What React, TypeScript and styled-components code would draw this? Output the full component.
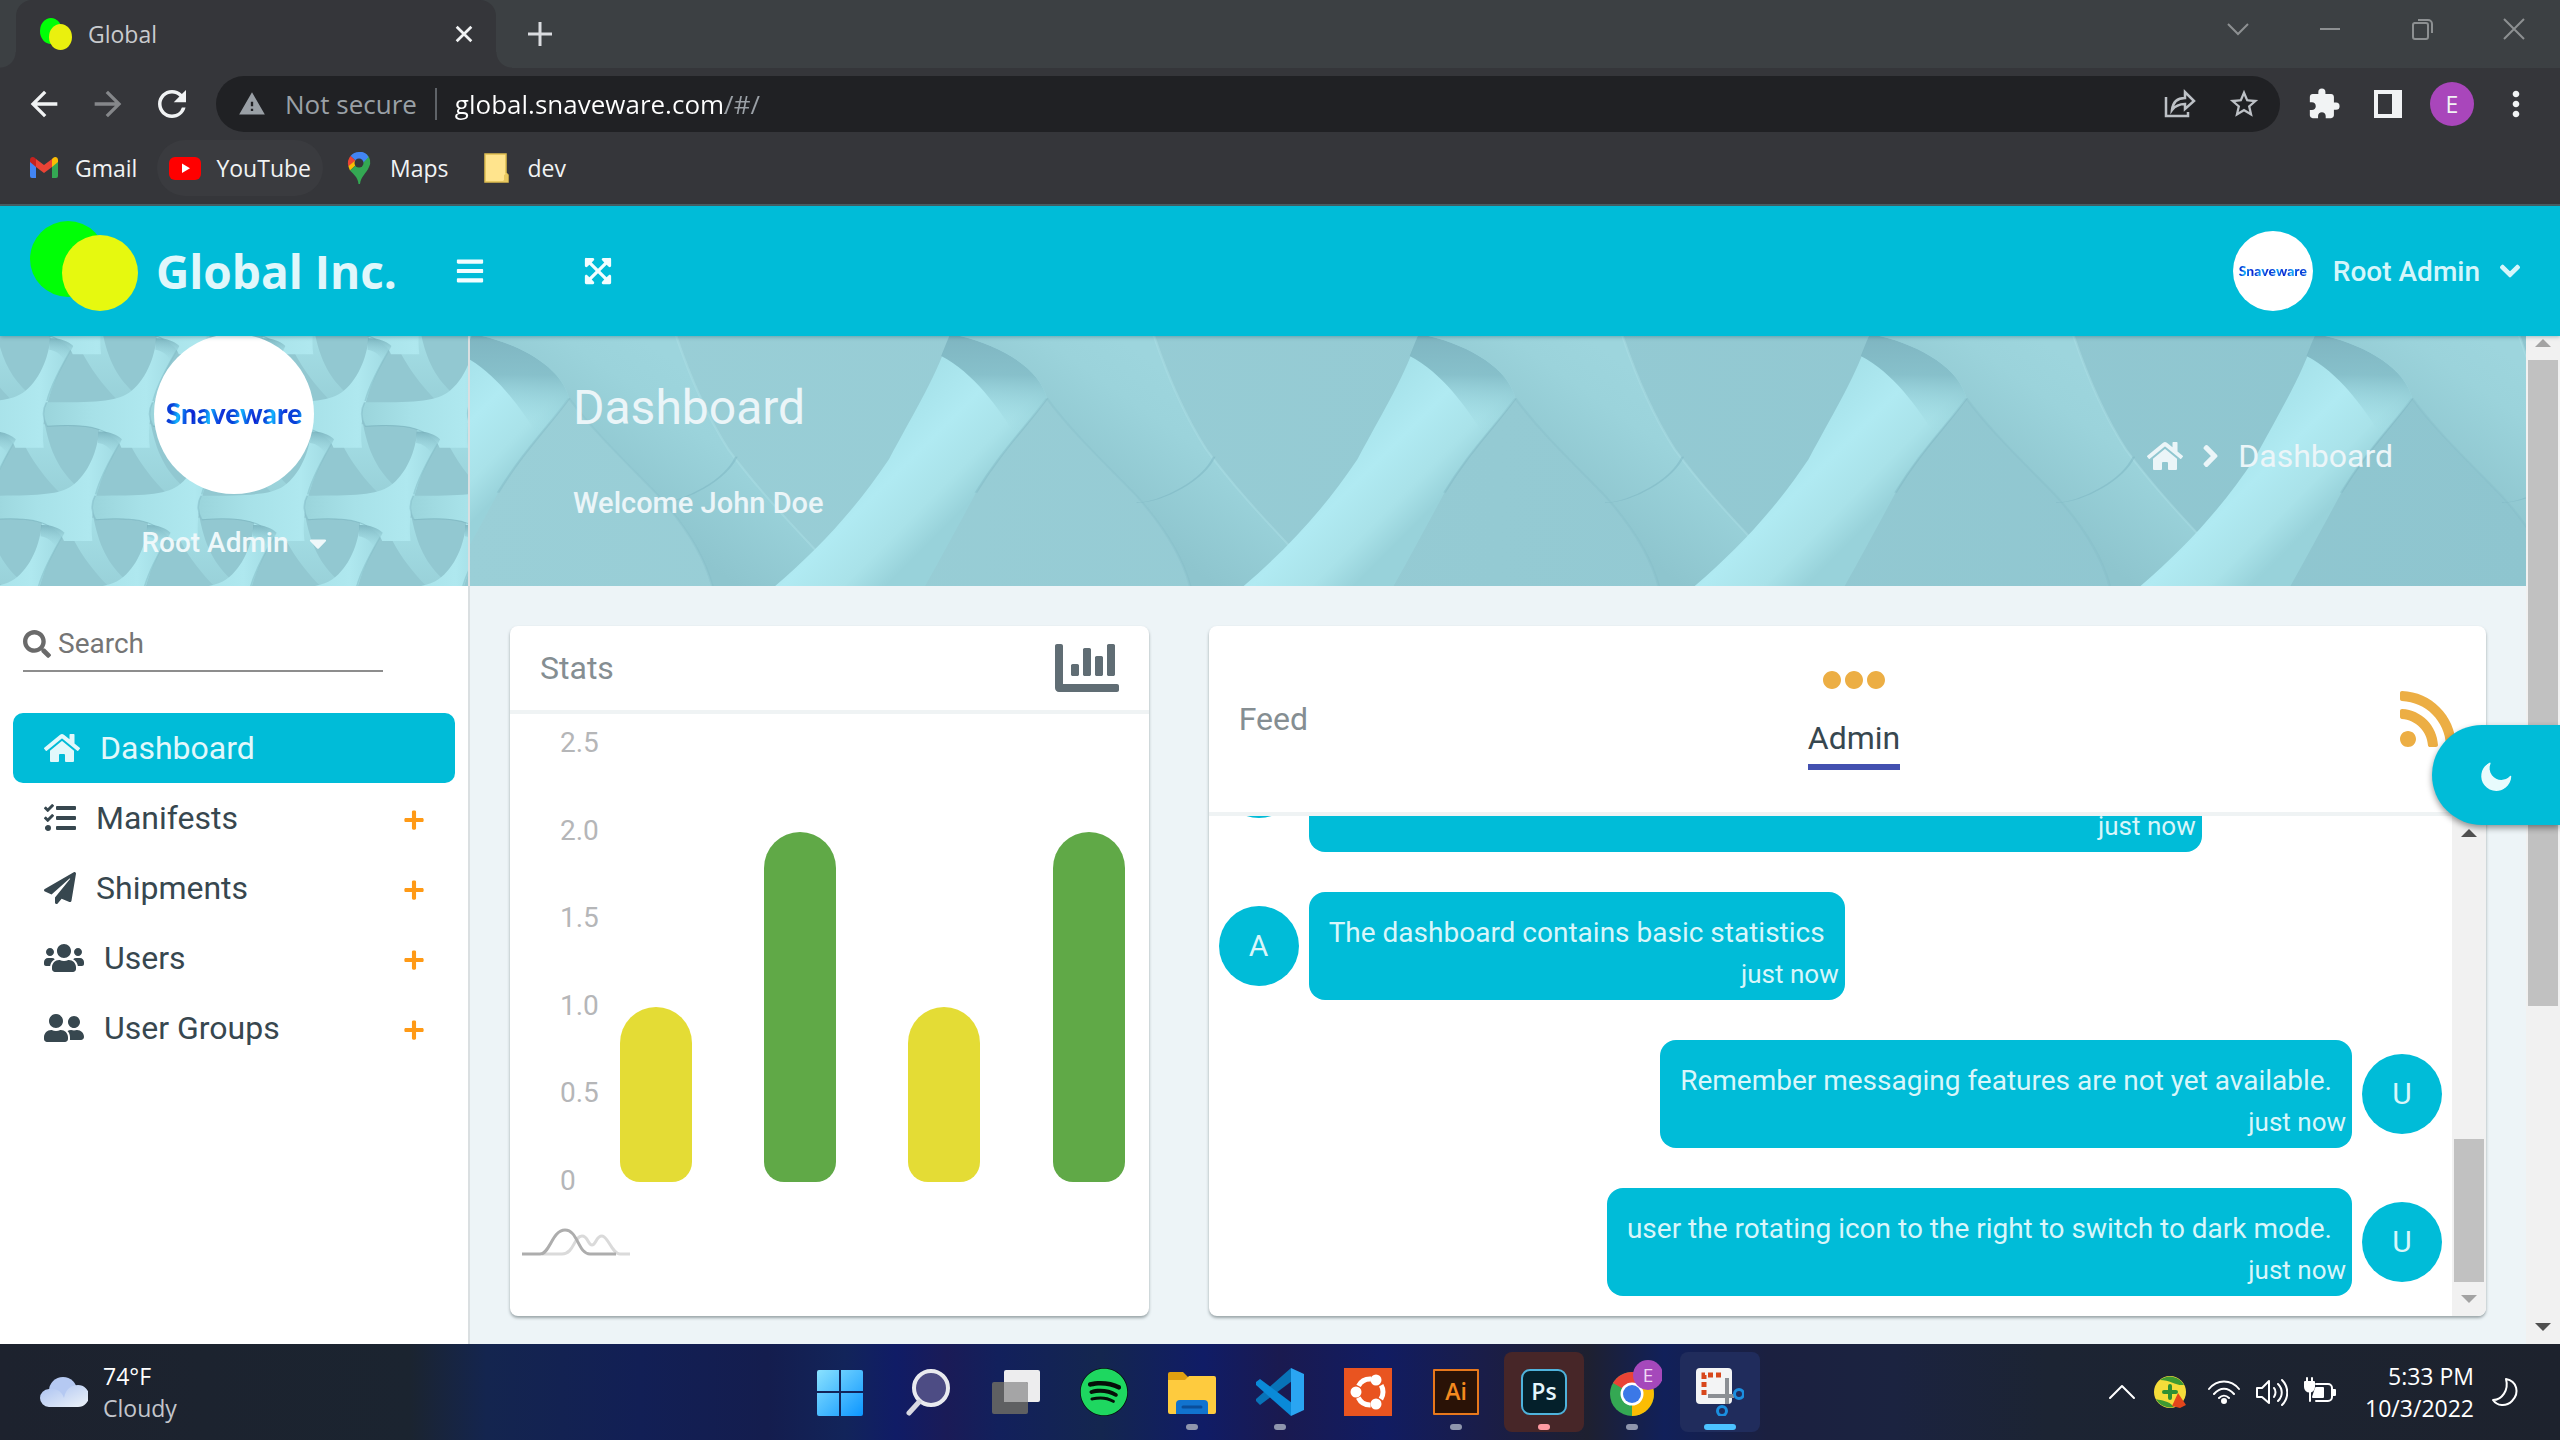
import React from 'react';
import styled, { createGlobalStyle } from 'styled-components';
import {
  FaHome, FaTasks, FaPaperPlane, FaUsers, FaUserFriends, FaPlus, FaSearch, FaBars,
  FaExpandArrowsAlt, FaChevronDown, FaChevronRight, FaCaretDown, FaChartBar, FaEllipsisH,
  FaRss, FaMoon, FaSpotify,
} from 'react-icons/fa';
import {
  MdArrowBack, MdArrowForward, MdRefresh, MdWarning, MdStarBorder, MdExtension, MdMoreVert,
} from 'react-icons/md';

const cyan = '#00bcd8';
const uiFont = `"Open Sans", "Noto Sans", sans-serif`;
const appFont = `Roboto, "Liberation Sans", sans-serif`;

const GlobalStyle = createGlobalStyle`
  *, *::before, *::after { box-sizing: border-box; }
  body { margin: 0; background: #edf4f7; }
  button, input { font: inherit; color: inherit; background: none; border: 0; padding: 0; margin: 0; outline: 0; }
  a { color: inherit; text-decoration: none; }
  h1, h2, p, ul { margin: 0; padding: 0; font-weight: inherit; font-size: inherit; list-style: none; }
  svg { display: block; flex: none; }
`;

const Screen = styled.div`
  display: flex;
  flex-direction: column;
  height: 100vh;
  overflow: hidden;
  font-family: ${appFont};
`;

/* Font Awesome glyphs are not square: the box takes the glyph's own width. */
const Glyph = styled.span<{ $w: number; $h: number }>`
  display: block;
  flex: none;
  svg { width: ${p => p.$w}px; height: ${p => p.$h}px; }
`;

/* ---------- browser ---------- */

const Browser = styled.div`
  flex: none;
  background: #35363a;
  border-bottom: 2px solid #4a5f64;
  font-family: ${uiFont};
  color: #f1f3f4;
`;

const TabStrip = styled.div`
  display: flex;
  height: 68px;
  padding-left: 16px;
  background: #3c4043;
`;

const Tab = styled.div`
  position: relative;
  display: flex;
  align-items: center;
  gap: 16px;
  width: 480px;
  padding: 0 16px 0 24px;
  border-radius: 16px 16px 0 0;
  background: #35363a;
  font-size: 23px;
  color: #c9cbce;
  &::before, &::after {
    content: '';
    position: absolute;
    bottom: 0;
    width: 16px;
    height: 16px;
  }
  &::before { left: -16px; background: radial-gradient(circle at 0 0, #3c4043 15px, #35363a 16px); }
  &::after { right: -16px; background: radial-gradient(circle at 100% 0, #3c4043 15px, #35363a 16px); }
`;

const TabTitle = styled.span`
  flex: 1;
`;

const PlainButton = styled.button<{ $w: number; $color?: string }>`
  display: flex;
  flex: none;
  align-items: center;
  justify-content: center;
  width: ${p => p.$w}px;
  color: ${p => p.$color ?? '#f1f3f4'};
`;

const WindowControls = styled.div`
  display: flex;
  height: 58px;
  margin-left: auto;
`;

const Toolbar = styled.div`
  display: flex;
  align-items: center;
  height: 72px;
  padding: 0 12px;
`;

const Omnibox = styled.div`
  display: flex;
  flex: 1;
  align-items: center;
  height: 56px;
  margin: 0 12px;
  padding: 0 4px 0 22px;
  border-radius: 28px;
  background: #202124;
  font-size: 26px;
  color: #9aa0a6;
`;

const Security = styled.span`
  margin-left: 19px;
  padding-right: 18px;
  border-right: 2px solid #5f6368;
  line-height: 32px;
`;

const Address = styled.input`
  flex: 1;
  min-width: 0;
  padding-left: 18px;
  color: transparent;
  background: linear-gradient(90deg, #fff 288px, #9aa0a6 288px);
  -webkit-background-clip: text;
  background-clip: text;
`;

const Profile = styled.span`
  width: 44px;
  border-radius: 50%;
  background: #a946bb;
  line-height: 44px;
  text-align: center;
  font-size: 23px;
`;

const Bookmarks = styled.nav`
  display: flex;
  gap: 8px;
  height: 64px;
  padding: 0 16px 8px;
  font-size: 23px;
`;

const Bookmark = styled.a<{ $hover?: boolean }>`
  display: flex;
  align-items: center;
  gap: 15px;
  padding: 0 12px;
  border-radius: 28px;
  background: ${p => (p.$hover ? '#3a3b3f' : 'transparent')};
`;

/* ---------- application header ---------- */

const AppHeader = styled.header`
  position: relative;
  z-index: 2;
  display: flex;
  flex: none;
  align-items: center;
  height: 130px;
  padding: 0 40px 0 28px;
  background: ${cyan};
  color: #fff;
  box-shadow: 0 1px 4px rgba(0, 80, 95, 0.35);
`;

const Brand = styled.a`
  display: flex;
  align-items: center;
  gap: 16px;
  width: 427px;
  font: 700 46px/60px "Open Sans", sans-serif;
  color: #e0f7fb;
`;

const HeaderButton = styled.button`
  display: flex;
  width: 128px;
  color: #f3fdff;
`;

const AccountMenu = styled.button`
  display: flex;
  align-items: center;
  gap: 20px;
  margin-left: auto;
  font-size: 28px;
  font-weight: 500;
  color: #d5f6fb;
`;

const Avatar = styled.span<{ $size: number }>`
  display: flex;
  align-items: center;
  justify-content: center;
  width: ${p => p.$size}px;
  height: ${p => p.$size}px;
  border-radius: 50%;
  background: #fff;
`;

const Wordmark = styled.span<{ $size: number }>`
  font: 900 ${p => p.$size}px/1.4 Lato, sans-serif;
  color: transparent;
  background: repeating-linear-gradient(100deg, #0a3fd8 0 6%, #12b6fe 11%, #0b5be6 16%, #1218d0 22%);
  -webkit-background-clip: text;
  background-clip: text;
`;

/* ---------- body ---------- */

const Body = styled.div`
  display: flex;
  flex: 1;
  min-height: 0;
`;

const Sidebar = styled.aside`
  flex: none;
  width: 470px;
  border-right: 2px solid #dadfe1;
  background: #fff;
`;

const Art = styled.svg`
  position: absolute;
  inset: 0;
  width: 100%;
  height: 100%;
`;

const ProfilePanel = styled.div`
  position: relative;
  display: flex;
  flex-direction: column;
  align-items: center;
  height: 250px;
  overflow: hidden;
  background: #97ccd5;
  ${Avatar} { position: relative; margin-top: -2px; }
`;

const ProfileButton = styled.button`
  position: relative;
  display: flex;
  align-items: center;
  gap: 20px;
  margin-top: 31px;
  font-size: 28px;
  font-weight: 500;
  line-height: 36px;
  color: #eef8fa;
`;

const SearchLabel = styled.label`
  display: flex;
  align-items: center;
  gap: 7px;
  width: 360px;
  margin: 38px 0 41px 23px;
  padding-bottom: 6px;
  border-bottom: 2px solid #8d8d8d;
  color: #6a6a6a;
`;

const SearchInput = styled.input`
  flex: 1;
  min-width: 0;
  font-size: 28px;
  line-height: 40px;
  &::placeholder { color: #757575; opacity: 1; }
`;

const NavList = styled.ul`
  padding: 0 13px;
`;

const NavLink = styled.a<{ $active?: boolean }>`
  display: flex;
  align-items: center;
  gap: 20px;
  height: 70px;
  padding: 0 30px 0 31px;
  border-radius: 10px;
  font-size: 32px;
  background: ${p => (p.$active ? cyan : 'transparent')};
  color: ${p => (p.$active ? '#e2f8fb' : '#37474f')};
`;

const Expand = styled.span`
  margin: 4px 0 0 auto;
  color: #ff9a16;
`;

const Main = styled.main`
  display: flex;
  flex: 1;
  flex-direction: column;
  min-width: 0;
`;

const Banner = styled.section`
  position: relative;
  display: flex;
  flex: none;
  align-items: flex-start;
  justify-content: space-between;
  height: 250px;
  padding: 44px 133px 0 103px;
  overflow: hidden;
  background: #97ccd5;
  color: #ebf5f8;
`;

const BannerText = styled.div`
  position: relative;
  h1 { font-size: 48px; line-height: 56px; }
  p { margin-top: 49px; font-size: 29px; font-weight: 500; line-height: 36px; }
`;

const Crumbs = styled.nav`
  position: relative;
  display: flex;
  align-items: center;
  gap: 20px;
  height: 152px;
  font-size: 32px;
`;

const Cards = styled.div`
  display: grid;
  grid-template-columns: 1fr 2fr;
  flex: 1;
  gap: 60px;
  min-height: 0;
  padding: 40px 40px 28px;
`;

const Card = styled.section`
  display: flex;
  flex-direction: column;
  min-width: 0;
  min-height: 0;
  overflow: hidden;
  border-radius: 8px;
  background: #fff;
  box-shadow: 0 2px 3px rgba(70, 85, 90, 0.5);
`;

const CardHeader = styled.header<{ $h: number }>`
  display: flex;
  flex: none;
  align-items: center;
  justify-content: space-between;
  height: ${p => p.$h}px;
  padding: 0 30px;
  border-bottom: 4px solid #eff3f4;
  font-size: 32px;
  h2 { color: #858e92; }
`;

const FeedTab = styled.button`
  display: flex;
  flex-direction: column;
  align-items: center;
  padding-bottom: 20px;
  color: #37474f;
  svg { color: #ecae44; }
`;

const TabLabel = styled.span`
  border-bottom: 6px solid #4350b0;
  line-height: 52px;
`;

/* ---------- chart ---------- */

const Chart = styled.div`
  display: flex;
  gap: 22px;
  height: 470px;
  margin-top: 13px;
  padding: 0 24px 0 50px;
`;

const Axis = styled.ul`
  display: flex;
  flex-direction: column;
  justify-content: space-between;
  width: 38px;
  font-size: 28px;
  line-height: 32px;
  color: #b5b6b8;
`;

const Plot = styled.div`
  display: flex;
  flex: 1;
  align-items: flex-end;
  justify-content: space-between;
  margin: 17px 0 15px;
`;

const Bar = styled.div<{ $color: string }>`
  width: 72px;
  border-radius: 36px 36px 20px 20px;
  background: ${p => p.$color};
`;

const ChartMark = styled.svg`
  margin: 30px 0 0 12px;
`;

/* ---------- feed ---------- */

const FeedBody = styled.div`
  display: flex;
  flex: 1;
  min-height: 0;
`;

const Messages = styled.ul`
  display: flex;
  flex: 1;
  flex-direction: column;
  justify-content: flex-end;
  gap: 40px;
  padding: 0 10px 20px;
  overflow: hidden;
`;

const Message = styled.li<{ $own?: boolean }>`
  display: flex;
  flex: none;
  flex-direction: ${p => (p.$own ? 'row-reverse' : 'row')};
  align-items: center;
  gap: 10px;
`;

const Initial = styled.span`
  width: 80px;
  height: 80px;
  border-radius: 50%;
  background: ${cyan};
  color: #d9f6fa;
  font-size: 30px;
  line-height: 80px;
  text-align: center;
`;

const Bubble = styled.div<{ $tall?: boolean }>`
  display: flex;
  flex-direction: column;
  justify-content: flex-end;
  width: ${p => (p.$tall ? '73%' : 'auto')};
  min-height: ${p => (p.$tall ? 148 : 108)}px;
  padding-bottom: 5px;
  border-radius: 16px;
  background: ${cyan};
  color: #d9f6fa;
  p { padding: 0 20px; font-size: 28px; line-height: 40px; }
  time { padding-right: 6px; font-size: 26px; line-height: 42px; text-align: right; }
`;

/* ---------- scroll bars ---------- */

const Track = styled.div<{ $tucked?: boolean }>`
  display: flex;
  flex: none;
  flex-direction: column;
  align-items: center;
  width: 34px;
  margin-top: ${p => (p.$tucked ? '-10px' : '0')};
  background: #f1f1f1;
`;

const Arrow = styled.span<{ $down?: boolean; $dim?: boolean }>`
  display: flex;
  flex: none;
  align-items: center;
  justify-content: center;
  height: 34px;
  &::before {
    content: '';
    border: 8px solid transparent;
    border-width: ${p => (p.$down ? '8px 8px 0' : '0 8px 8px')};
    border-${p => (p.$down ? 'top' : 'bottom')}-color: ${p => (p.$dim ? '#a3a3a3' : '#505050')};
  }
`;

const Rail = styled.div<{ $end?: boolean }>`
  display: flex;
  flex: 1;
  align-items: ${p => (p.$end ? 'flex-end' : 'flex-start')};
  width: 30px;
  min-height: 0;
`;

const Thumb = styled.div`
  width: 100%;
  background: #c1c1c1;
`;

const ThemeButton = styled.button`
  position: absolute;
  z-index: 3;
  top: 725px;
  right: 0;
  display: flex;
  align-items: center;
  width: 128px;
  height: 100px;
  padding: 4px 0 0 48px;
  border-radius: 50px 0 0 50px;
  background: ${cyan};
  color: #e8fbfd;
  box-shadow: 0 3px 6px rgba(0, 0, 0, 0.4);
  svg { transform: rotate(-37deg); }
`;

/* ---------- task bar ---------- */

const TaskBar = styled.footer`
  position: relative;
  display: grid;
  grid-template-columns: 1fr auto 1fr;
  flex: none;
  align-items: center;
  height: 96px;
  font-family: ${uiFont};
  color: #fff;
  background: linear-gradient(90deg, #1d222e 0, #1b2430 16%, #14254f 19%, #121f55 25%, #141d4e 30%,
    #12245a 33%, #101c66 35%, #1a1b57 37%, #12205c 39%, #14264f 43%, #101c66 47%, #1a1a50 50%,
    #111c62 54%, #1a1d48 58%, #1e2030 62%, #11205a 65%, #1b2040 69%, #1b2340 74%, #1c2433 80%, #1d222d 100%);
`;

const Weather = styled.button`
  display: flex;
  align-items: center;
  gap: 15px;
  margin-left: 40px;
  font-size: 23px;
  line-height: 32px;
  text-align: left;
  span { display: block; }
  span + span { color: #c3c6cc; }
`;

const Apps = styled.div`
  display: flex;
  gap: 8px;
`;

const AppButton = styled.button<{ $bg?: string }>`
  position: relative;
  display: flex;
  align-items: center;
  justify-content: center;
  width: 80px;
  height: 80px;
  border-radius: 8px;
  background: ${p => p.$bg ?? 'transparent'};
`;

const Running = styled.span<{ $color: string; $w: number }>`
  position: absolute;
  bottom: 2px;
  left: calc(50% - ${p => p.$w / 2}px);
  width: ${p => p.$w}px;
  height: 6px;
  border-radius: 3px;
  background: ${p => p.$color};
`;

const Tray = styled.div`
  display: flex;
  align-items: center;
  justify-content: flex-end;
  gap: 16px;
  padding-right: 38px;
`;

const SystemIcons = styled.button`
  display: flex;
  gap: 16px;
  margin-left: 6px;
`;

const Clock = styled.time`
  width: 122px;
  font-size: 23px;
  line-height: 32px;
  text-align: right;
  span { display: block; }
`;

/* ---------- drawings ---------- */

const DiscLogo = () => (
  <svg width="112" height="100" viewBox="0 0 112 100">
    <circle cx="40" cy="38" r="38" fill="#00ff06" />
    <circle cx="72" cy="52" r="38" fill="#e6f90f" />
  </svg>
);

const Favicon = () => (
  <svg width="32" height="32" viewBox="0 0 32 32">
    <ellipse cx="11" cy="13" rx="11" ry="13" fill="#00ff06" />
    <ellipse cx="20.500" cy="19" rx="11.500" ry="13" fill="#eaf00e" />
  </svg>
);

const Line = ({ d, size = 24, w = 2 }: { d: string; size?: number; w?: number }) => (
  <svg width={size} height={size} viewBox="0 0 24 24" fill="none" stroke="currentColor" strokeWidth={w}>
    <path d={d} />
  </svg>
);

const GmailIcon = () => (
  <svg width="32" height="32" viewBox="0 0 32 32">
    <path d="M2 8v16a2 2 0 0 0 2 2h4V13z" fill="#4285f4" />
    <path d="M30 8v16a2 2 0 0 1-2 2h-4V13z" fill="#34a853" />
    <path d="M24 7v8l6-5V8c0-3-3-4-5-2z" fill="#fbbc04" />
    <path d="M8 7v8l-6-5V8c0-3 3-4 5-2z" fill="#c5221f" />
    <path d="M8 7l8 6 8-6v8l-8 6-8-6z" fill="#ea4335" />
  </svg>
);

const YouTubeIcon = () => (
  <svg width="32" height="32" viewBox="0 0 32 32">
    <rect y="5" width="32" height="23" rx="6" fill="#f00" />
    <path d="M13 11.500v9.500l8-4.700z" fill="#fff" />
  </svg>
);

const MapsIcon = () => (
  <svg width="32" height="32" viewBox="0 0 32 32">
    <path d="M16 0A11 11 0 0 0 7.500 4L13 9 24 2.500A11 11 0 0 0 16 0z" fill="#4285f4" />
    <path d="M7.500 4A11 11 0 0 0 5.500 14.500L13 9z" fill="#ea4335" />
    <path d="M24 2.500L7 18.500A11 11 0 0 1 5.500 14L13 8z" fill="#fbbc04" />
    <path d="M24 2.500A11 11 0 0 1 26 15C23 22 18 24 17 32H15.500C15 25 10 22 7 18.500z" fill="#34a853" />
    <path d="M16 0A11 11 0 0 1 25.500 5L17 14 12 9z" fill="#4285f4" />
    <circle cx="16" cy="11" r="4.500" fill="#35363a" />
  </svg>
);

const FolderMark = () => (
  <svg width="32" height="32" viewBox="0 0 32 32">
    <path d="M5 2h21v19l2 2v7H5z" fill="#ffe48d" stroke="#e0bf50" strokeWidth="1.500" />
    <path d="M24 28v-5l3-2 1 9h-6z" fill="#e8c860" />
  </svg>
);

const BannerStrand = ({ x }: { x: number }) => (
  <g transform={`translate(${x} 0)`}>
    <path d="M5 0H153C164 130 176 240 192 340C214 460 238 560 257 642L245 750H180C174 660 160 570 140 480C116 380 92 290 73 187Z" fill="url(#soft)" />
    <path d="M153 0C164 130 176 240 192 340C214 460 238 560 257 642" fill="none" stroke="#aee0e7" strokeWidth="2" opacity=".45" />
    <path d="M73 187C92 290 116 380 140 480C160 570 174 660 180 750" fill="none" stroke="#7fb7c2" strokeWidth="2" opacity=".25" />
    <path d="M198 362C190 430 160 500 140 500" fill="none" stroke="#78b2be" strokeWidth="2" opacity=".45" />
    <path d="M0 0C-8 110 -25 220 -45 370C-70 520 -98 640 -130 750H-18C-4 650 8 560 20 470C38 350 58 270 73 187C68 100 40 30 8 0Z" fill="url(#stem)" />
    <path d="M20 470C38 350 58 270 73 187" fill="none" stroke="#74adba" strokeWidth="2" opacity=".3" />
    <path d="M0 0H8C40 30 68 100 73 187C66 225 58 265 50 300C36 210 18 110 -6 60Z" fill="url(#cap)" />
  </g>
);

const BannerArt = () => (
  <Art viewBox="7 0 1536 750" preserveAspectRatio="none" aria-hidden>
    <defs>
      <linearGradient id="stem" gradientUnits="userSpaceOnUse" x1="-70" y1="330" x2="50" y2="360">
        <stop offset="0" stopColor="#a6e2ea" />
        <stop offset=".4" stopColor="#b0eaf2" />
        <stop offset=".75" stopColor="#a9e2e9" />
        <stop offset="1" stopColor="#98d2da" />
      </linearGradient>
      <linearGradient id="cap" gradientUnits="userSpaceOnUse" x1="40" y1="0" x2="25" y2="290">
        <stop offset="0" stopColor="#7fb5c1" />
        <stop offset=".4" stopColor="#80b9c4" stopOpacity=".85" />
        <stop offset="1" stopColor="#9fdbe2" stopOpacity="0" />
      </linearGradient>
      <linearGradient id="soft" gradientUnits="userSpaceOnUse" x1="40" y1="300" x2="210" y2="240">
        <stop offset="0" stopColor="#8ec5ce" />
        <stop offset=".7" stopColor="#9bd3db" />
        <stop offset="1" stopColor="#9dd5dd" />
      </linearGradient>
      <linearGradient id="ground" x1="0" y1="0" x2="1" y2="0">
        <stop offset="0" stopColor="#9acfd7" />
        <stop offset="1" stopColor="#8ec5cf" />
      </linearGradient>
    </defs>
    <rect width="1550" height="750" fill="url(#ground)" />
    {[8, 365, 715, 1052, 1385].map(x => <BannerStrand key={x} x={x} />)}
  </Art>
);

const latticeRows = [2, 1, 0, -1];
const latticeCols = [-1, 0, 1, 2, 3, 4, 5, 6];
const latticeAt = (r: number, c: number) => `translate(${128 + c * 194 - r * 105} ${15 + r * 280})`;

const LatticeArt = () => (
  <Art viewBox="0 0 856 750" preserveAspectRatio="none" aria-hidden>
    <defs>
      <linearGradient id="arm" gradientUnits="userSpaceOnUse" x1="-237" y1="0" x2="6" y2="0">
        <stop offset="0" stopColor="#9bd5dc" />
        <stop offset=".35" stopColor="#a7e1e8" />
        <stop offset=".75" stopColor="#afe8ef" />
        <stop offset="1" stopColor="#9fd9e1" />
      </linearGradient>
      <linearGradient id="shade" x1="0" y1="0" x2="0" y2="1">
        <stop offset="0" stopColor="#74acb8" />
        <stop offset="1" stopColor="#9ad3db" stopOpacity="0" />
      </linearGradient>
      <linearGradient id="fade" x1="0" y1="0" x2="0" y2="1">
        <stop offset="0" stopColor="#a5dfe6" />
        <stop offset="1" stopColor="#98d0d8" />
      </linearGradient>
    </defs>
    <rect width="856" height="750" fill="#92c8d1" />
    {latticeRows.map(r => latticeCols.map(c => (
      <g key={`${r}.${c}`} transform={latticeAt(r, c)}>
        <path d="M-100 250C-84 320 -60 390 -10 470L22 450C-14 400 -34 350 -46 250Z" fill="url(#fade)" />
      </g>
    )))}
    {latticeRows.map(r => latticeCols.map(c => (
      <g key={`${r}-${c}`} transform={latticeAt(r, c)}>
        <path d="M-35 -20C-38 50 -56 120 -86 155C-110 182 -150 184 -237 184C-244 205 -244 232 -236 256C-190 250 -150 252 -128 275C-112 292 -104 300 -100 320H-48C-56 220 -30 110 6 15C-2 0 -14 -14 -35 -20Z" fill="url(#arm)" />
        <path d="M-237 184C-244 205 -244 232 -236 256" fill="none" stroke="#82bac5" strokeWidth="3" opacity=".5" />
        <path d="M-236 256C-190 250 -150 252 -128 275" fill="none" stroke="#6fa9b6" strokeWidth="3" opacity=".5" />
        <path d="M6 15C-14 70 -34 130 -42 180" fill="none" stroke="#80b9c4" strokeWidth="3" opacity=".5" />
      </g>
    )))}
    {latticeRows.map(r => latticeCols.map(c => (
      <path key={`${r}/${c}`} transform={latticeAt(r, c)}
        d="M-37 -8C-20 -10 -4 0 6 15L-8 62C-16 40 -26 28 -38 26Z" fill="url(#shade)" opacity=".8" />
    )))}
  </Art>
);

const Icon48 = ({ children }: { children: React.ReactNode }) => (
  <svg width="48" height="48" viewBox="0 0 48 48">{children}</svg>
);

const StartIcon = () => (
  <Icon48>
    <defs>
      <linearGradient id="win" gradientUnits="userSpaceOnUse" x1="0" y1="0" x2="48" y2="48">
        <stop offset="0" stopColor="#8ee4fe" /><stop offset="1" stopColor="#0b95ff" />
      </linearGradient>
    </defs>
    <path d="M3 2H23V23H1V4a2 2 0 0 1 2-2zM25 2H45a2 2 0 0 1 2 2V23H25zM1 25H23V48H3a2 2 0 0 1-2-2zM25 25H47V46a2 2 0 0 1-2 2H25z" fill="url(#win)" />
  </Icon48>
);

const SearchIcon = () => (
  <Icon48>
    <circle cx="27" cy="20" r="17" fill="#4d4c84" stroke="#e9eaef" strokeWidth="4" />
    <path d="M15 34L5 45" stroke="#d8d9e2" strokeWidth="5" strokeLinecap="round" />
  </Icon48>
);

const TaskViewIcon = () => (
  <Icon48>
    <rect x="12" y="2" width="36" height="32" rx="2" fill="#ededee" />
    <rect x="0" y="14" width="36" height="32" rx="2" fill="#5f6062" />
    <path d="M12 14H34a2 2 0 0 1 2 2V34H12z" fill="#a5a5a6" />
  </Icon48>
);

const ExplorerIcon = () => (
  <Icon48>
    <path d="M0 6a2 2 0 0 1 2-2H15l5 5v7H0z" fill="#e0a010" />
    <path d="M0 12H17l4-4H46a2 2 0 0 1 2 2V44a2 2 0 0 1-2 2H2a2 2 0 0 1-2-2z" fill="#fecb3e" />
    <path d="M8 46V36a4 4 0 0 1 4-4H36a4 4 0 0 1 4 4V46z" fill="#1173cf" />
    <path d="M15 39H33" stroke="#0a4e9b" strokeWidth="3" strokeLinecap="round" />
  </Icon48>
);

const CodeIcon = () => (
  <Icon48>
    <path d="M35 0L0 31V33L4 37L36 13z" fill="#0873b8" />
    <path d="M4 11L0 14V17L35 48L36 35z" fill="#0a8ad8" />
    <path d="M35 0L48 6V42L35 48z" fill="#2aa5f2" />
  </Icon48>
);

const UbuntuIcon = () => (
  <Icon48>
    <rect width="48" height="48" fill="#e95420" />
    <circle cx="26" cy="24" r="13" fill="none" stroke="#fff" strokeWidth="5" strokeDasharray="15 12.227" strokeDashoffset="7.500" />
    {[[12, 24], [32, 12], [32, 36]].map(([x, y]) => (
      <circle key={y} cx={x} cy={y} r="5.500" fill="#fff" />
    ))}
  </Icon48>
);

const AdobeBadge = styled.span<{ $bg: string; $fg: string; $text: string; $round: number }>`
  width: 46px;
  height: 46px;
  border: 2px solid ${p => p.$fg};
  border-radius: ${p => p.$round}px;
  background: ${p => p.$bg};
  color: ${p => p.$text};
  font: 600 23px/40px "Open Sans", sans-serif;
  text-align: center;
`;

const ChromeIcon = () => (
  <svg width="60" height="64" viewBox="0 0 60 64">
    <g transform="translate(6 10)">
      <circle cx="24" cy="24" r="22" fill="#34a853" />
      <path d="M24 24L5 13A22 22 0 0 1 43 13z" fill="#ea4335" />
      <path d="M24 24L43 13A22 22 0 0 1 24 46z" fill="#fbbc04" />
      <circle cx="24" cy="24" r="11.500" fill="#fff" />
      <circle cx="24" cy="24" r="9" fill="#3b78e7" />
    </g>
    <circle cx="46" cy="15" r="15" fill="#a548bb" />
    <text x="46" y="22" textAnchor="middle" fontFamily="Open Sans, sans-serif" fontSize="19" fill="#f0d8f5">E</text>
  </svg>
);

const SnipIcon = () => (
  <Icon48>
    <rect y="0" width="36" height="36" rx="4" fill="#f3f4f5" />
    <path d="M8 27V7H28" fill="none" stroke="#d8471c" strokeWidth="5" strokeDasharray="5 3" />
    <path d="M31 10V36M12 28H38" stroke="#8b8f94" strokeWidth="4" />
    <circle cx="43" cy="26" r="4.500" fill="none" stroke="#1b8fe0" strokeWidth="3" />
    <circle cx="26" cy="43" r="4.500" fill="none" stroke="#1b8fe0" strokeWidth="3" />
  </Icon48>
);

const CloudIcon = () => (
  <svg width="48" height="32" viewBox="0 0 48 32">
    <defs>
      <linearGradient id="cloud" x1="0" y1="0" x2="1" y2="1">
        <stop offset="0" stopColor="#a9c1f2" /><stop offset="1" stopColor="#eef3f8" />
      </linearGradient>
    </defs>
    <circle cx="23" cy="15" r="14" fill="#b5c9f2" />
    <path d="M9 13C17 12 22 16 24 22C26 12 32 9 38 9A11 11 0 0 1 38 31H9A9 9 0 0 1 9 13z" fill="url(#cloud)" />
  </svg>
);

const TrayIcon = ({ children }: { children: React.ReactNode }) => (
  <svg width="32" height="32" viewBox="0 0 32 32" fill="none" stroke="#fff" strokeWidth="2" strokeLinecap="round" strokeLinejoin="round">
    {children}
  </svg>
);

/* ---------- data ---------- */

const navItems = [
  { label: 'Dashboard', Icon: FaHome, width: 36, active: true },
  { label: 'Manifests', Icon: FaTasks, width: 32 },
  { label: 'Shipments', Icon: FaPaperPlane, width: 32 },
  { label: 'Users', Icon: FaUsers, width: 40 },
  { label: 'User Groups', Icon: FaUserFriends, width: 40 },
];

const axis = ['2.5', '2.0', '1.5', '1.0', '0.5', '0'];
const stats = [1, 2, 1, 2];

const messages = [
  { from: 'A', text: '' },
  { from: 'A', text: 'The dashboard contains basic statistics' },
  { from: 'U', text: 'Remember messaging features are not yet available.' },
  { from: 'U', text: 'user the rotating icon to the right to switch to dark mode.' },
];

const bookmarks = [
  { label: 'Gmail', Icon: GmailIcon },
  { label: 'YouTube', Icon: YouTubeIcon, hover: true },
  { label: 'Maps', Icon: MapsIcon },
  { label: 'dev', Icon: FolderMark },
];

const SpotifyIcon = styled(FaSpotify)`
  border-radius: 50%;
  background: #050f08;
  color: #1ed760;
`;

const idle = '#8f96ad';
const apps: { name: string; icon: React.ReactNode; bg?: string; mark?: string; wide?: boolean }[] = [
  { name: 'Start', icon: <StartIcon /> },
  { name: 'Search', icon: <SearchIcon /> },
  { name: 'Task view', icon: <TaskViewIcon /> },
  { name: 'Spotify', icon: <SpotifyIcon size={48} /> },
  { name: 'Explorer', icon: <ExplorerIcon />, mark: idle },
  { name: 'Code', icon: <CodeIcon />, mark: idle },
  { name: 'Ubuntu', icon: <UbuntuIcon /> },
  { name: 'Illustrator', icon: <AdobeBadge $bg="#2a1206" $fg="#e8781c" $text="#f58a1f" $round={1}>Ai</AdobeBadge>, mark: idle },
  { name: 'Photoshop', icon: <AdobeBadge $bg="#04202b" $fg="#4fb3dc" $text="#e4f6fd" $round={9}>Ps</AdobeBadge>, bg: '#472628', mark: '#ff9aa2' },
  { name: 'Chrome', icon: <ChromeIcon />, mark: idle },
  { name: 'Snipping tool', icon: <SnipIcon />, bg: '#202c5c', mark: '#4cc2ff', wide: true },
];

const BrowserChrome = () => (
  <Browser>
    <TabStrip>
      <Tab>
        <Favicon />
        <TabTitle>Global</TabTitle>
        <PlainButton $w={32} aria-label="Close tab"><Line d="M4 4L20 20M20 4L4 20" size={22} w={3} /></PlainButton>
      </Tab>
      <PlainButton $w={88} $color="#dadce0" aria-label="New tab"><Line d="M12 0V24M0 12H24" w={3} /></PlainButton>
      <WindowControls>
        <PlainButton $w={92} $color="#8d9092" aria-label="Search tabs"><Line d="M2 7L12 17L22 7" size={24} /></PlainButton>
        <PlainButton $w={92} $color="#8d9092" aria-label="Minimize"><Line d="M2 12H22" /></PlainButton>
        <PlainButton $w={92} $color="#8d9092" aria-label="Restore">
          <Line d="M4 6H16a2 2 0 0 1 2 2V20a2 2 0 0 1-2 2H5a2 2 0 0 1-2-2V8a2 2 0 0 1 2-2M8 3H18a4 4 0 0 1 4 4V16" />
        </PlainButton>
        <PlainButton $w={92} $color="#8d9092" aria-label="Close"><Line d="M2 2L22 22M22 2L2 22" /></PlainButton>
      </WindowControls>
    </TabStrip>
    <Toolbar>
      <PlainButton $w={64} aria-label="Back"><MdArrowBack size={40} /></PlainButton>
      <PlainButton $w={64} $color="#85878a" aria-label="Forward"><MdArrowForward size={40} /></PlainButton>
      <PlainButton $w={64} aria-label="Reload"><MdRefresh size={42} /></PlainButton>
      <Omnibox>
        <MdWarning size={28} />
        <Security>Not secure</Security>
        <Address aria-label="Address" defaultValue="global.snaveware.com/#/" />
        <PlainButton $w={64} $color="#bdc1c6" aria-label="Share">
          <svg width="32" height="32" viewBox="0 0 32 32" fill="none" stroke="currentColor" strokeWidth="2.500">
            <path d="M2 9V28H24V24M8 22C9 13 14 10 21 10V4L30 13L21 21V16C15 16 11 18 8 22z" />
          </svg>
        </PlainButton>
        <PlainButton $w={64} $color="#bdc1c6" aria-label="Bookmark"><MdStarBorder size={34} /></PlainButton>
      </Omnibox>
      <PlainButton $w={64} aria-label="Extensions"><MdExtension size={34} /></PlainButton>
      <PlainButton $w={64} aria-label="Side panel">
        <svg width="28" height="28" viewBox="0 0 28 28"><path d="M0 0H28V28H0zM4 4V24H18V4z" fill="currentColor" fillRule="evenodd" /></svg>
      </PlainButton>
      <PlainButton $w={64} aria-label="Profile"><Profile>E</Profile></PlainButton>
      <PlainButton $w={64} aria-label="Menu"><MdMoreVert size={40} /></PlainButton>
    </Toolbar>
    <Bookmarks>
      {bookmarks.map(({ label, Icon, hover }) => (
        <Bookmark key={label} href="#" $hover={hover}><Icon />{label}</Bookmark>
      ))}
    </Bookmarks>
  </Browser>
);

const StatsCard = () => (
  <Card>
    <CardHeader $h={88}>
      <h2>Stats</h2>
      <FaChartBar size={64} color="#606d74" />
    </CardHeader>
    <Chart>
      <Axis>{axis.map(v => <li key={v}>{v}</li>)}</Axis>
      <Plot>
        {stats.map((v, i) => (
          <Bar key={i} $color={v > 1 ? '#60a947' : '#e4dc35'} style={{ height: `${(v / 2.5) * 100}%` }} />
        ))}
      </Plot>
    </Chart>
    <ChartMark width="110" height="30" viewBox="0 0 110 30" fill="none" strokeWidth="3">
      <path d="M20 27H40C52 27 52 9 60 9C66 9 66 18 70 18C74 18 74 9 80 9C86 9 90 27 98 27H108" stroke="#dadada" />
      <path d="M0 27H18C28 27 30 3 43 3C56 3 56 27 68 27H94" stroke="#adadad" />
    </ChartMark>
  </Card>
);

const FeedCard = () => (
  <Card>
    <CardHeader $h={190}>
      <h2>Feed</h2>
      <FeedTab>
        <FaEllipsisH size={64} />
        <TabLabel>Admin</TabLabel>
      </FeedTab>
      <Glyph $w={56} $h={64}><FaRss color="#ecae44" /></Glyph>
    </CardHeader>
    <FeedBody>
      <Messages>
        {messages.map((m, i) => (
          <Message key={i} $own={m.from === 'U'}>
            <Initial>{m.text && m.from}</Initial>
            <Bubble $tall={!m.text}>
              {m.text && <p>{m.text}</p>}
              <time>just now</time>
            </Bubble>
          </Message>
        ))}
      </Messages>
      <Track>
        <Arrow />
        <Rail $end><Thumb style={{ height: '33%' }} /></Rail>
        <Arrow $down $dim />
      </Track>
    </FeedBody>
  </Card>
);

export default function App() {
  return (
    <Screen>
      <GlobalStyle />
      <BrowserChrome />
      <AppHeader>
        <Brand href="#"><DiscLogo />Global Inc.</Brand>
        <HeaderButton aria-label="Toggle menu"><FaBars size={30} /></HeaderButton>
        <HeaderButton aria-label="Full screen"><FaExpandArrowsAlt size={30} /></HeaderButton>
        <AccountMenu>
          <Avatar $size={80}><Wordmark $size={14}>Snaveware</Wordmark></Avatar>
          Root Admin
          <Glyph $w={20} $h={22}><FaChevronDown stroke="currentColor" strokeWidth={30} /></Glyph>
        </AccountMenu>
      </AppHeader>
      <Body>
        <Sidebar>
          <ProfilePanel>
            <LatticeArt />
            <Avatar $size={160}><Wordmark $size={28}>Snaveware</Wordmark></Avatar>
            <ProfileButton>Root Admin<Glyph $w={18} $h={28}><FaCaretDown /></Glyph></ProfileButton>
          </ProfilePanel>
          <SearchLabel>
            <FaSearch size={28} />
            <SearchInput type="search" placeholder="Search" aria-label="Search" />
          </SearchLabel>
          <NavList>
            {navItems.map(({ label, Icon, width, active }) => (
              <li key={label}>
                <NavLink href="#" $active={active}>
                  <Glyph $w={width} $h={32}><Icon /></Glyph>
                  {label}
                  {!active && <Expand><FaPlus size={22} /></Expand>}
                </NavLink>
              </li>
            ))}
          </NavList>
        </Sidebar>
        <Main>
          <Banner>
            <BannerArt />
            <BannerText>
              <h1>Dashboard</h1>
              <p>Welcome John Doe</p>
            </BannerText>
            <Crumbs>
              <Glyph $w={36} $h={32}><FaHome /></Glyph>
              <Glyph $w={15} $h={24}><FaChevronRight stroke="currentColor" strokeWidth={30} /></Glyph>
              <a href="#">Dashboard</a>
            </Crumbs>
          </Banner>
          <Cards>
            <StatsCard />
            <FeedCard />
          </Cards>
        </Main>
        <Track $tucked>
          <Arrow $dim />
          <Rail><Thumb style={{ height: '68%' }} /></Rail>
          <Arrow $down />
        </Track>
      </Body>
      <ThemeButton aria-label="Switch to dark mode"><FaMoon size={30} /></ThemeButton>
      <TaskBar>
        <Weather>
          <CloudIcon />
          <span><span>74°F</span><span>Cloudy</span></span>
        </Weather>
        <Apps>
          {apps.map(a => (
            <AppButton key={a.name} aria-label={a.name} $bg={a.bg}>
              {a.icon}
              {a.mark && <Running $color={a.mark} $w={a.wide ? 32 : 12} />}
            </AppButton>
          ))}
        </Apps>
        <Tray>
          <TrayIcon><path d="M4 22L16 10L28 22" /></TrayIcon>
          <TrayIcon>
            <circle cx="16" cy="16" r="16" fill="#f5dc3a" stroke="none" />
            <path d="M6 4A16 16 0 0 1 30 9C22 10 16 4 6 4zM2 23A16 16 0 0 0 20 31C14 24 8 25 2 23z" fill="#3f9a32" stroke="none" />
            <path d="M16 10V22M10 16H22" stroke="#2f8f33" strokeWidth="4" />
            <path d="M18 30L24 17L32 29L26 32z" fill="#e2451b" stroke="none" />
          </TrayIcon>
          <SystemIcons aria-label="Network, sound and battery">
            <TrayIcon>
              <path d="M1 13C9 3 23 3 31 13M6 18C12 11 20 11 26 18M11 22C14 19 18 19 21 22" />
              <circle cx="16" cy="25" r="2" fill="#fff" />
            </TrayIcon>
            <TrayIcon>
              <path d="M1 12V21H6L13 27V5L6 12zM18 12C20 14 20 18 18 21M22 8C27 13 27 20 22 25M26 4C33 11 33 22 26 29" />
            </TrayIcon>
            <TrayIcon>
              <path d="M12 8H24a4 4 0 0 1 4 4V21a4 4 0 0 1-4 4H12M6 14V25M29 14V19H31V14z" />
              <path d="M1 6H10V11a4 4 0 0 1-9 0zM3 2V6M8 2V6" fill="#fff" />
              <path d="M12 12H19V21H9z" fill="#fff" />
            </TrayIcon>
          </SystemIcons>
          <Clock><span>5:33 PM</span><span>10/3/2022</span></Clock>
          <TrayIcon><path d="M16 3C27 5 30 17 22 25C16 31 7 30 3 24C12 24 19 14 16 3z" /></TrayIcon>
        </Tray>
      </TaskBar>
    </Screen>
  );
}
